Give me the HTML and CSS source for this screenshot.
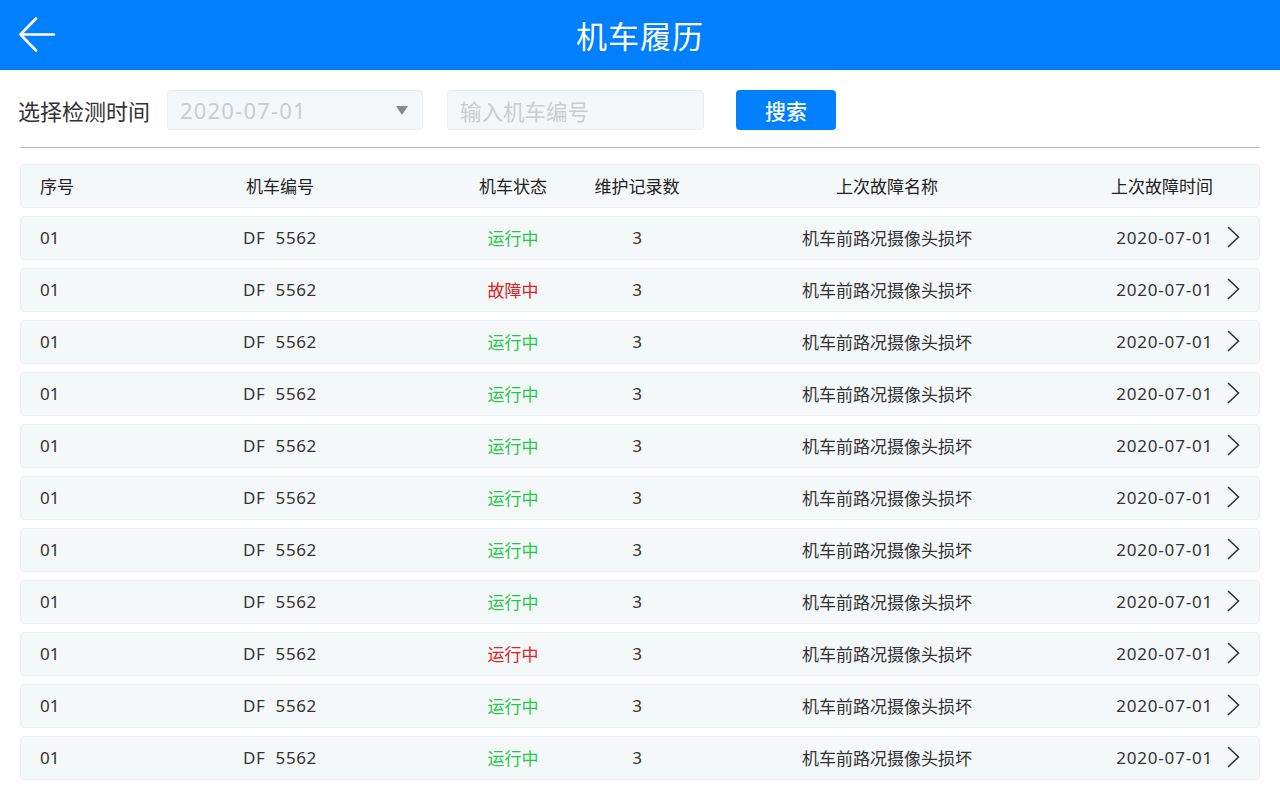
FILE: index.html
```html
<!DOCTYPE html>
<html lang="zh-CN">
<head>
<meta charset="utf-8">
<title>机车履历</title>
<link rel="stylesheet" href="styles.css">
</head>
<body>
<header class="topbar">
  <svg class="back" width="38" height="38" viewBox="0 0 38 38"><path d="M36 18.5H2.5M18 2.5L2.5 18.5L18 34.5" fill="none" stroke="#fff" stroke-width="2.6" stroke-linecap="round" stroke-linejoin="round"/></svg>
  <h1 class="title">机车履历</h1>
</header>
<section class="filters">
  <span class="label">选择检测时间</span>
  <div class="select"><span class="select-val">2020-07-01</span><span class="tri"></span></div>
  <div class="input"><span class="placeholder">输入机车编号</span></div>
  <button class="search">搜索</button>
</section>
<div class="divider"></div>
<div class="table">
  <div class="row head">
    <span class="c1">序号</span><span class="c2">机车编号</span><span class="c3">机车状态</span><span class="c4">维护记录数</span><span class="c5">上次故障名称</span><span class="c6">上次故障时间</span><span class="c7"></span>
  </div>
  <div class="row"><span class="c1">01</span><span class="c2">DF&nbsp;&nbsp;5562</span><span class="c3 ok">运行中</span><span class="c4">3</span><span class="c5">机车前路况摄像头损坏</span><span class="c6">2020-07-01</span><span class="c7"><svg class="chev" width="14" height="24" viewBox="0 0 14 24"><path d="M2 2L12.5 12L2 22" fill="none" stroke="#333" stroke-width="1.6"/></svg></span></div>
  <div class="row"><span class="c1">01</span><span class="c2">DF&nbsp;&nbsp;5562</span><span class="c3 bad">故障中</span><span class="c4">3</span><span class="c5">机车前路况摄像头损坏</span><span class="c6">2020-07-01</span><span class="c7"><svg class="chev" width="14" height="24" viewBox="0 0 14 24"><path d="M2 2L12.5 12L2 22" fill="none" stroke="#333" stroke-width="1.6"/></svg></span></div>
  <div class="row"><span class="c1">01</span><span class="c2">DF&nbsp;&nbsp;5562</span><span class="c3 ok">运行中</span><span class="c4">3</span><span class="c5">机车前路况摄像头损坏</span><span class="c6">2020-07-01</span><span class="c7"><svg class="chev" width="14" height="24" viewBox="0 0 14 24"><path d="M2 2L12.5 12L2 22" fill="none" stroke="#333" stroke-width="1.6"/></svg></span></div>
  <div class="row"><span class="c1">01</span><span class="c2">DF&nbsp;&nbsp;5562</span><span class="c3 ok">运行中</span><span class="c4">3</span><span class="c5">机车前路况摄像头损坏</span><span class="c6">2020-07-01</span><span class="c7"><svg class="chev" width="14" height="24" viewBox="0 0 14 24"><path d="M2 2L12.5 12L2 22" fill="none" stroke="#333" stroke-width="1.6"/></svg></span></div>
  <div class="row"><span class="c1">01</span><span class="c2">DF&nbsp;&nbsp;5562</span><span class="c3 ok">运行中</span><span class="c4">3</span><span class="c5">机车前路况摄像头损坏</span><span class="c6">2020-07-01</span><span class="c7"><svg class="chev" width="14" height="24" viewBox="0 0 14 24"><path d="M2 2L12.5 12L2 22" fill="none" stroke="#333" stroke-width="1.6"/></svg></span></div>
  <div class="row"><span class="c1">01</span><span class="c2">DF&nbsp;&nbsp;5562</span><span class="c3 ok">运行中</span><span class="c4">3</span><span class="c5">机车前路况摄像头损坏</span><span class="c6">2020-07-01</span><span class="c7"><svg class="chev" width="14" height="24" viewBox="0 0 14 24"><path d="M2 2L12.5 12L2 22" fill="none" stroke="#333" stroke-width="1.6"/></svg></span></div>
  <div class="row"><span class="c1">01</span><span class="c2">DF&nbsp;&nbsp;5562</span><span class="c3 ok">运行中</span><span class="c4">3</span><span class="c5">机车前路况摄像头损坏</span><span class="c6">2020-07-01</span><span class="c7"><svg class="chev" width="14" height="24" viewBox="0 0 14 24"><path d="M2 2L12.5 12L2 22" fill="none" stroke="#333" stroke-width="1.6"/></svg></span></div>
  <div class="row"><span class="c1">01</span><span class="c2">DF&nbsp;&nbsp;5562</span><span class="c3 ok">运行中</span><span class="c4">3</span><span class="c5">机车前路况摄像头损坏</span><span class="c6">2020-07-01</span><span class="c7"><svg class="chev" width="14" height="24" viewBox="0 0 14 24"><path d="M2 2L12.5 12L2 22" fill="none" stroke="#333" stroke-width="1.6"/></svg></span></div>
  <div class="row"><span class="c1">01</span><span class="c2">DF&nbsp;&nbsp;5562</span><span class="c3 bad">运行中</span><span class="c4">3</span><span class="c5">机车前路况摄像头损坏</span><span class="c6">2020-07-01</span><span class="c7"><svg class="chev" width="14" height="24" viewBox="0 0 14 24"><path d="M2 2L12.5 12L2 22" fill="none" stroke="#333" stroke-width="1.6"/></svg></span></div>
  <div class="row"><span class="c1">01</span><span class="c2">DF&nbsp;&nbsp;5562</span><span class="c3 ok">运行中</span><span class="c4">3</span><span class="c5">机车前路况摄像头损坏</span><span class="c6">2020-07-01</span><span class="c7"><svg class="chev" width="14" height="24" viewBox="0 0 14 24"><path d="M2 2L12.5 12L2 22" fill="none" stroke="#333" stroke-width="1.6"/></svg></span></div>
  <div class="row"><span class="c1">01</span><span class="c2">DF&nbsp;&nbsp;5562</span><span class="c3 ok">运行中</span><span class="c4">3</span><span class="c5">机车前路况摄像头损坏</span><span class="c6">2020-07-01</span><span class="c7"><svg class="chev" width="14" height="24" viewBox="0 0 14 24"><path d="M2 2L12.5 12L2 22" fill="none" stroke="#333" stroke-width="1.6"/></svg></span></div>
</div>
</body>
</html>
```

FILE: styles.css
```css
* { box-sizing: border-box; }
html, body { margin: 0; padding: 0; background: #fff; }
body {
  font-family: "Noto Sans", "Noto Sans CJK SC", sans-serif;
  color: #333;
  width: 1280px;
  height: 800px;
  overflow: hidden;
}
.topbar {
  height: 70px;
  background: #0080ff;
  display: flex;
  align-items: center;
  justify-content: center;
  position: relative;
}
.back { position: absolute; left: 18px; top: 16px; }
.title {
  margin: 0 0 2px 0;
  color: #fff;
  font-family: "Noto Sans CJK SC", sans-serif;
  font-size: 31px;
  font-weight: 400;
  letter-spacing: 1px;
}
.filters {
  display: flex;
  align-items: center;
  padding: 20px 0 0 18px;
  height: 60px;
}
.label {
  font-family: "Noto Sans CJK SC", sans-serif;
  font-size: 22px;
  color: #333;
  margin-right: 17px;
}
.select, .input {
  height: 40px;
  background: #f4f7f9;
  border: 1px solid #ebeef0;
  border-radius: 4px;
  display: flex;
  align-items: center;
}
.select {
  width: 256px;
  padding: 0 14px 0 12px;
  justify-content: space-between;
}
.select-val {
  font-size: 22px;
  color: #c9cdd0;
  letter-spacing: 1.2px;
}
.tri {
  width: 0; height: 0;
  border-left: 6px solid transparent;
  border-right: 6px solid transparent;
  border-top: 9px solid #888;
}
.input {
  width: 257px;
  margin-left: 24px;
  padding-left: 12px;
}
.placeholder {
  font-family: "Noto Sans CJK SC", sans-serif;
  font-size: 21.5px;
  color: #c9cdd0;
}
.search {
  margin-left: 32px;
  width: 100px;
  height: 40px;
  border: none;
  border-radius: 4px;
  background: #0080ff;
  color: #fff;
  font-family: "Noto Sans CJK SC", sans-serif;
  font-size: 21px;
  font-weight: 500;
  padding: 0;
}
.divider {
  margin: 17px 20px 0 20px;
  height: 1px;
  background: #bdbdbd;
}
.table {
  margin: 16px 20px 0 20px;
  display: flex;
  flex-direction: column;
  gap: 8px;
}
.row {
  height: 44px;
  background: #f5f8f9;
  border: 1px solid #eceff1;
  border-radius: 4px;
  display: grid;
  grid-template-columns: 67px 346px 120px 128px 372px 140px 27px;
  align-items: center;
  padding: 0 19px 2px 19px;
  font-size: 17px;
  color: #333;
}
.row.head { font-family: "Noto Sans CJK SC", sans-serif; font-weight: 400; font-size: 17px; color: #222; padding-bottom: 1px; }
.row span { white-space: nowrap; }
.c1 { text-align: left; }
.c2, .c3, .c4, .c5 { text-align: center; }
.c2 { letter-spacing: 0.6px; }
.c6 { text-align: right; letter-spacing: 0.8px; }
.row.head .c6, .row.head .c2 { letter-spacing: 0; }
.c7 { display: flex; justify-content: flex-end; align-items: center; }
.c5, .c3 { font-family: "Noto Sans CJK SC", sans-serif; }
.ok { color: #1fc94a; }
.bad { color: #e0201c; }
```
